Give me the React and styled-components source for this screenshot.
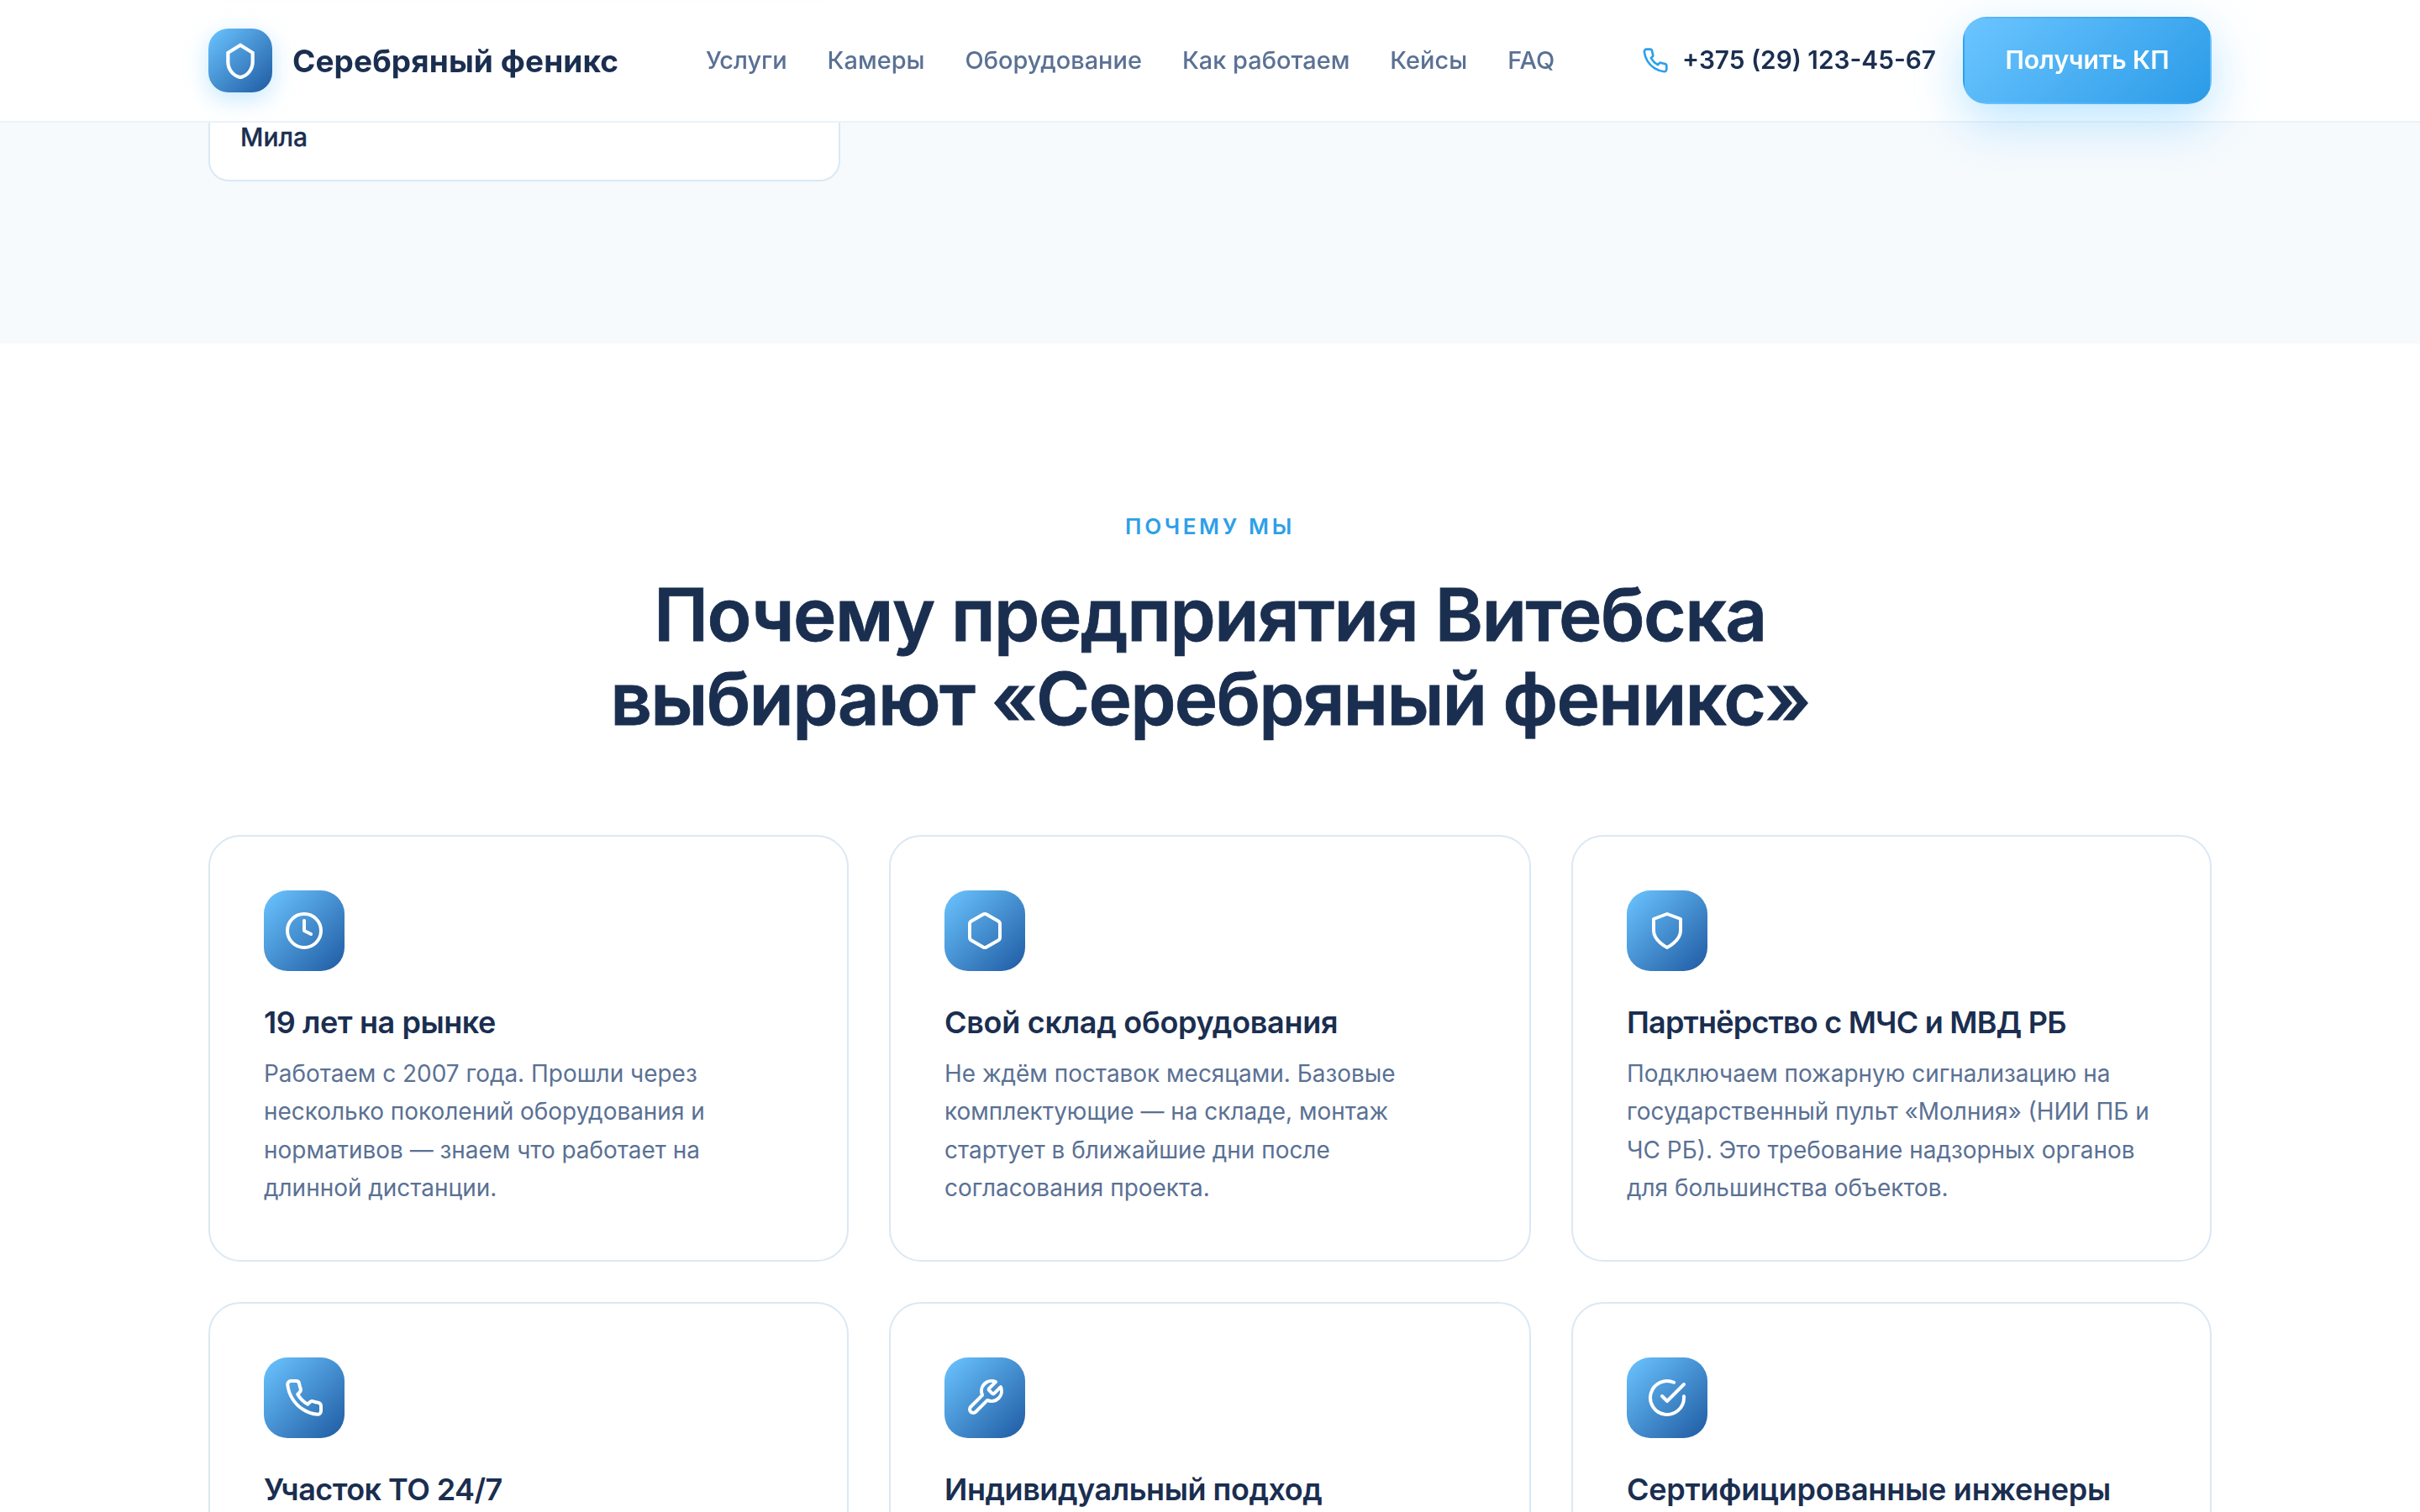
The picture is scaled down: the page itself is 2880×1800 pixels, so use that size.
import React from "react"
import styled, { createGlobalStyle } from "styled-components"

const GlobalStyle = createGlobalStyle`
    * {
        box-sizing: border-box;
    }
    body {
        margin: 0;
        background: #fff;
        color: #1a2e50;
        font-family: Inter, "Noto Sans", sans-serif;
    }
`

const Page = styled.div`
    height: 1800px;
    overflow: hidden;
`

const Container = styled.div`
    width: 2384px;
    margin: 0 auto;
`

const Header = styled.header`
    position: fixed;
    top: 0;
    left: 0;
    right: 0;
    z-index: 10;
    height: 146px;
    border-bottom: 2px solid #eaf2fb;
    background: rgba(255, 255, 255, 0.92);
    backdrop-filter: blur(24px);
`

const HeaderInner = styled(Container)`
    height: 144px;
    display: flex;
    align-items: center;
    justify-content: space-between;
`

const Brand = styled.a`
    display: flex;
    align-items: center;
    gap: 24px;
    font-size: 37px;
    font-weight: 700;
    letter-spacing: 0.1px;
    white-space: nowrap;
`

const BrandMark = styled.span`
    width: 76px;
    height: 76px;
    display: flex;
    align-items: center;
    justify-content: center;
    border-radius: 24px;
    background: linear-gradient(135deg, #6bc5ff, #1f5aa2);
    box-shadow: 0 8px 28px rgba(107, 197, 255, 0.4);
`

const Nav = styled.nav`
    padding-bottom: 2px;
    display: flex;
    gap: 48px;
`

const NavLink = styled.a`
    color: #5a7194;
    font-size: 28.95px;
    font-weight: 500;
    white-space: nowrap;
`

const HeaderActions = styled.div`
    display: flex;
    align-items: center;
    gap: 32px;
`

const Phone = styled.a`
    display: flex;
    align-items: center;
    gap: 16px;
    font-size: 29.8px;
    font-weight: 600;
    white-space: nowrap;
    svg {
        color: #2e9fe9;
    }
`

const PhoneNumber = styled.span`
    padding-bottom: 2px;
`

const CtaButton = styled.button`
    min-width: 296px;
    height: 104px;
    padding: 0 48px 2px;
    border: 2px solid transparent;
    border-radius: 28px;
    background: linear-gradient(135deg, #6bc5ff, #2b9be7);
    box-shadow: 0 20px 60px rgba(107, 197, 255, 0.45);
    color: #fff;
    font-family: inherit;
    font-size: 30px;
    font-weight: 600;
    white-space: nowrap;
`

const ReviewsSection = styled.section`
    padding-bottom: 193px;
    background: #f6fafd;
`

const ReviewCard = styled.div`
    width: 752px;
    height: 216px;
    padding: 28px 36px;
    display: flex;
    flex-direction: column;
    justify-content: flex-end;
    border: 2px solid #dbe8f4;
    border-radius: 24px;
    background: #fff;
`

const ReviewAuthor = styled.p`
    margin: 0;
    font-size: 30px;
    font-weight: 500;
    line-height: 45px;
    -webkit-text-stroke: 0.3px #1a2e50;
`

const WhySection = styled.section`
    padding-top: 197px;
`

const Eyebrow = styled.p`
    margin: 0 0 34px;
    color: #2e9fe9;
    font-size: 26px;
    font-weight: 600;
    line-height: 42px;
    letter-spacing: 0.14em;
    text-align: center;
    text-transform: uppercase;
`

const SectionTitle = styled.h2`
    margin: 0 0 112px;
    font-size: 87px;
    font-weight: 600;
    line-height: 100px;
    text-align: center;
    -webkit-text-stroke: 0.8px #1a2e50;
`

const TitleLine = styled.span`
    display: block;
    letter-spacing: ${props => props.$tracking}px;
`

const Grid = styled.div`
    display: grid;
    grid-template-columns: 762px 764px 762px;
    gap: 48px;
`

const Card = styled.article`
    min-height: 508px;
    padding: 64px 64px 62px;
    border: 2px solid #dbe8f4;
    border-radius: 38px;
    background: #fff;
`

const CardIcon = styled.div`
    width: 96px;
    height: 96px;
    margin-bottom: 40px;
    display: flex;
    align-items: center;
    justify-content: center;
    border-radius: 28px;
    background: linear-gradient(135deg, #6bc5ff, #1f5aa2);
    color: #fff;
`

const CardTitle = styled.h3`
    margin: 0 0 18px;
    font-size: 36px;
    font-weight: 600;
    line-height: 42px;
    letter-spacing: ${props => props.$tracking}px;
    white-space: nowrap;
`

const CardText = styled.p`
    margin: 0;
    color: #5a7194;
    font-size: 27.95px;
    line-height: 45.3px;
`

const Icon = ({
    size = 48,
    children
}) => {
    return (
        <svg width={size} height={size} viewBox="0 0 24 24" fill="none" stroke="currentColor"
            strokeWidth="2" strokeLinecap="round" strokeLinejoin="round">
            {children}
        </svg>
    )
}

const BrandIcon = () => {
    return (
        <svg width="44" height="44" viewBox="0 0 24 24" fill="none" stroke="#fff" strokeWidth="2.3">
            <path d="M12 2L4 7v6c0 5 3.5 9 8 10 4.5-1 8-5 8-10V7l-8-5z"/>
        </svg>
    )
}

const PhoneIcon = ({ size }) => {
    return (
        <Icon size={size}>
            <path d="M22 16.92v3a2 2 0 0 1-2.18 2 19.79 19.79 0 0 1-8.63-3.07 19.5 19.5 0 0 1-6-6 19.79 19.79 0 0 1-3.07-8.67A2 2 0 0 1 4.11 2h3a2 2 0 0 1 2 1.72 12.84 12.84 0 0 0 .7 2.81 2 2 0 0 1-.45 2.11L8.09 9.91a16 16 0 0 0 6 6l1.27-1.27a2 2 0 0 1 2.11-.45 12.84 12.84 0 0 0 2.81.7A2 2 0 0 1 22 16.92z"/>
        </Icon>
    )
}

const ClockIcon = () => {
    return (
        <Icon>
            <circle cx="12" cy="12" r="10"/>
            <polyline points="12 6 12 12 16 14"/>
        </Icon>
    )
}

const BoxIcon = () => {
    return (
        <Icon>
            <path d="M21 16V8a2 2 0 0 0-1-1.73l-7-4a2 2 0 0 0-2 0l-7 4A2 2 0 0 0 3 8v8a2 2 0 0 0 1 1.73l7 4a2 2 0 0 0 2 0l7-4A2 2 0 0 0 21 16z"/>
        </Icon>
    )
}

const ShieldIcon = () => {
    return (
        <Icon>
            <path d="M12 22s8-4 8-10V5l-8-3-8 3v7c0 6 8 10 8 10z"/>
        </Icon>
    )
}

const WrenchIcon = () => {
    return (
        <Icon>
            <path d="M14.7 6.3a1 1 0 0 0 0 1.4l1.6 1.6a1 1 0 0 0 1.4 0l3.77-3.77a6 6 0 0 1-7.94 7.94l-6.91 6.91a2.12 2.12 0 0 1-3-3l6.91-6.91a6 6 0 0 1 7.94-7.94l-3.76 3.76z"/>
        </Icon>
    )
}

const CheckIcon = () => {
    return (
        <Icon>
            <path d="M22 11.08V12a10 10 0 1 1-5.93-9.14"/>
            <polyline points="22 4 12 14.01 9 11.01"/>
        </Icon>
    )
}

const navItems = ["Услуги", "Камеры", "Оборудование", "Как работаем", "Кейсы", "FAQ"]

const features = [
    {
        icon: ClockIcon,
        title: "19 лет на рынке",
        tracking: -0.43,
        text: "Работаем с 2007 года. Прошли через несколько поколений оборудования и нормативов — знаем что работает на длинной дистанции."
    },
    {
        icon: BoxIcon,
        title: "Свой склад оборудования",
        tracking: -0.28,
        text: "Не ждём поставок месяцами. Базовые комплектующие — на складе, монтаж стартует в ближайшие дни после согласования проекта."
    },
    {
        icon: ShieldIcon,
        title: "Партнёрство с МЧС и МВД РБ",
        tracking: -0.79,
        text: "Подключаем пожарную сигнализацию на государственный пульт «Молния» (НИИ ПБ и ЧС РБ). Это требование надзорных органов для большинства объектов."
    },
    {
        icon: PhoneIcon,
        title: "Участок ТО 24/7",
        tracking: -0.55
    },
    {
        icon: WrenchIcon,
        title: "Индивидуальный подход",
        tracking: -0.45
    },
    {
        icon: CheckIcon,
        title: "Сертифицированные инженеры",
        tracking: -0.23
    }
]

const FeatureCard = ({
    icon: FeatureIcon,
    title,
    tracking,
    text
}) => {
    return (
        <Card>
            <CardIcon><FeatureIcon/></CardIcon>
            <CardTitle $tracking={tracking}>{title}</CardTitle>
            {text && <CardText>{text}</CardText>}
        </Card>
    )
}

const App = () => {
    return (
        <Page>
            <GlobalStyle/>
            <Header>
                <HeaderInner>
                    <Brand>
                        <BrandMark><BrandIcon/></BrandMark>
                        Серебряный феникс
                    </Brand>
                    <Nav>
                        {navItems.map(item => <NavLink key={item}>{item}</NavLink>)}
                    </Nav>
                    <HeaderActions>
                        <Phone>
                            <PhoneIcon size={32}/>
                            <PhoneNumber>+375 (29) 123-45-67</PhoneNumber>
                        </Phone>
                        <CtaButton>Получить КП</CtaButton>
                    </HeaderActions>
                </HeaderInner>
            </Header>
            <ReviewsSection>
                <Container>
                    <ReviewCard>
                        <ReviewAuthor>Мила</ReviewAuthor>
                    </ReviewCard>
                </Container>
            </ReviewsSection>
            <WhySection>
                <Container>
                    <Eyebrow>Почему мы</Eyebrow>
                    <SectionTitle>
                        <TitleLine $tracking={-1.5}>Почему предприятия Витебска</TitleLine>
                        <TitleLine $tracking={-1.7}>выбирают «Серебряный феникс»</TitleLine>
                    </SectionTitle>
                    <Grid>
                        {features.map(feature => <FeatureCard key={feature.title} {...feature}/>)}
                    </Grid>
                </Container>
            </WhySection>
        </Page>
    )
}

export default App
